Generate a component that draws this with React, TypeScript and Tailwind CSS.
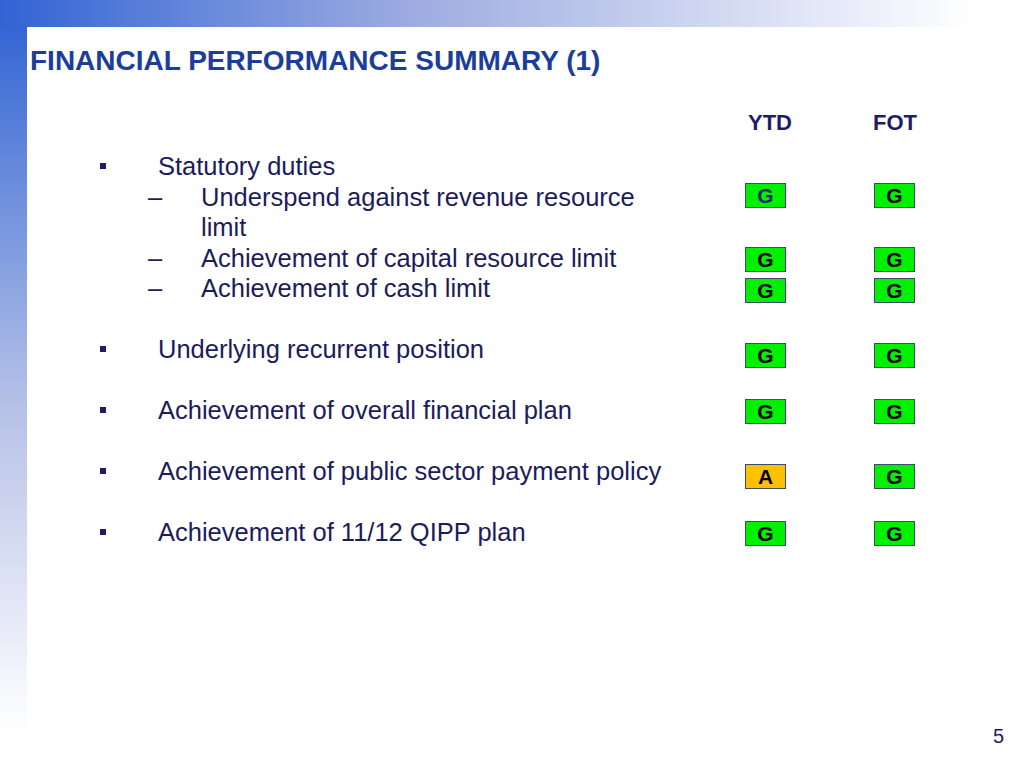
import React from 'react';

type Rag = 'G' | 'A';

type Row = {
  kind: 'bullet' | 'dash' | 'blank';
  text?: string;
  ytd?: Rag;
  fot?: Rag;
  offset?: string;
  navyYtd?: boolean;
};

const rows: Row[] = [
  { kind: 'bullet', text: 'Statutory duties' },
  { kind: 'dash', text: 'Underspend against revenue resource limit', ytd: 'G', fot: 'G', offset: 'pt-[1px]', navyYtd: true },
  { kind: 'dash', text: 'Achievement of capital resource limit', ytd: 'G', fot: 'G', offset: 'pt-[4px]' },
  { kind: 'dash', text: 'Achievement of cash limit', ytd: 'G', fot: 'G', offset: 'pt-[5px]' },
  { kind: 'blank' },
  { kind: 'bullet', text: 'Underlying recurrent position', ytd: 'G', fot: 'G', offset: 'pt-[9px]' },
  { kind: 'blank' },
  { kind: 'bullet', text: 'Achievement of overall financial plan', ytd: 'G', fot: 'G', offset: 'pt-[4px]' },
  { kind: 'blank' },
  { kind: 'bullet', text: 'Achievement of public sector payment policy', ytd: 'A', fot: 'G', offset: 'pt-[8px]' },
  { kind: 'blank' },
  { kind: 'bullet', text: 'Achievement of 11/12 QIPP plan', ytd: 'G', fot: 'G', offset: 'pt-[4px]' },
];

const Badge: React.FC<{ value: Rag; navy?: boolean }> = ({ value, navy }) => (
  <div
    className={
      'w-[41px] h-[25px] border border-[#3b4d6b] flex items-center justify-center font-bold text-[21px] leading-none ' +
      (value === 'A' ? 'bg-[#ffc000] ' : 'bg-[#00f000] ') +
      (navy ? 'text-[#1f2a6b]' : 'text-black')
    }
  >
    {value}
  </div>
);

export default function App() {
  return (
    <div className="w-[1024px] h-[768px] flex flex-col bg-white font-['Liberation_Sans',Arial,sans-serif] overflow-hidden">
      <div className="h-[27px] shrink-0 bg-linear-to-r from-[#3163d3] via-[#9dabe0] via-40% to-white to-95%" />
      <div className="flex flex-1">
        <div className="w-[27px] shrink-0 bg-linear-to-b from-[#3465d3] via-[#b4bfe6] via-50% to-white to-95%" />
        <div className="flex-1 flex flex-col">
          <h1 className="mt-[18px] pl-[3px] text-[28px] leading-[32px] font-bold text-[#1b3d9b]">
            FINANCIAL PERFORMANCE SUMMARY (1)
          </h1>

          <div className="mt-[33px] flex text-[22px] leading-[26px] font-bold text-[#1c1c6b]">
            <span className="ml-[721px]">YTD</span>
            <span className="ml-[81px]">FOT</span>
          </div>

          <div className="mt-[15px] pl-[73px] flex flex-col text-[25.5px] leading-[30.5px] text-[#1c1c5c]">
            {rows.map((row, i) => {
              if (row.kind === 'blank') return <div key={i} className="h-[30.5px]" />;
              return (
                <div key={i} className="flex items-start">
                  <div className="w-[645px] flex items-start">
                    {row.kind === 'bullet' ? (
                      <>
                        <div className="w-[58px] h-[30.5px] flex items-center">
                          <div className="w-[6px] h-[6px] bg-[#1c1c6b]" />
                        </div>
                        <div className="w-[530px]">{row.text}</div>
                      </>
                    ) : (
                      <>
                        <div className="w-[48px]" />
                        <div className="w-[53px]">–</div>
                        <div className="w-[460px]">{row.text}</div>
                      </>
                    )}
                  </div>
                  {row.ytd && (
                    <div className={'h-[30.5px] flex items-start ' + (row.offset ?? '')}>
                      <Badge value={row.ytd} navy={row.navyYtd} />
                      <div className="w-[88px]" />
                      <Badge value={row.fot ?? 'G'} />
                    </div>
                  )}
                </div>
              );
            })}
          </div>

          <div className="flex-1" />
          <div className="pb-[20px] pr-[20px] text-right text-[20px] leading-[24px] text-[#1c1c5c]">5</div>
        </div>
      </div>
    </div>
  );
}
